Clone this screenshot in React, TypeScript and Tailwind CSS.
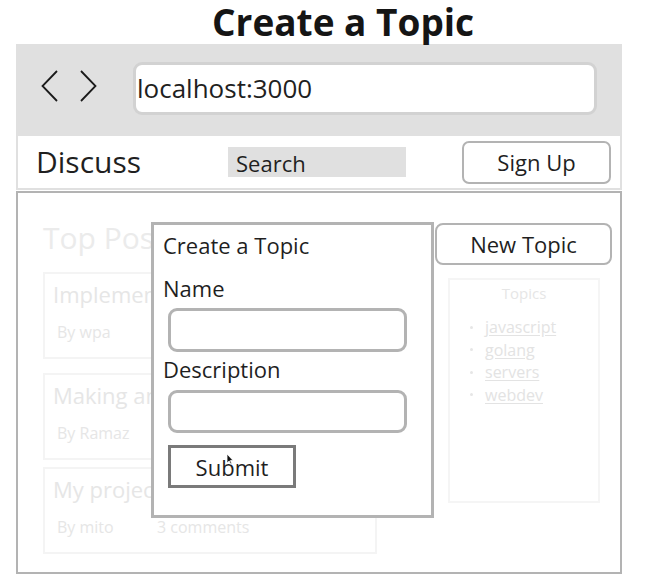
const posts = [
  { title: 'Implementing auth', author: 'By wpa', comments: '', top: 'mt-[16px]' },
  { title: 'Making an app', author: 'By Ramaz', comments: '', top: 'mt-[14px]' },
  { title: 'My project', author: 'By mito', comments: '3 comments', top: 'mt-[7px]' },
];

const topics = ['javascript', 'golang', 'servers', 'webdev'];

const Chevron = ({ dir }: { dir: 'left' | 'right' }) => (
  <svg width="17" height="32" viewBox="0 0 17 32" className="mb-[5px]">
    <polyline
      points={dir === 'left' ? '16,1 1.5,16 16,31' : '1,1 15.5,16 1,31'}
      fill="none"
      stroke="#1a1a1a"
      strokeWidth="1.8"
    />
  </svg>
);

const App = () => {
  return (
    <div className="w-[667px] h-[585px] bg-white text-[#1f1f1f] font-['Open_Sans',sans-serif] overflow-hidden">
      <h1 className="pl-[212px] text-[37px] leading-[44px] font-bold text-[#151515]">Create a Topic</h1>

      <div className="ml-[16px] w-[606px]">
        {/* browser chrome */}
        <div className="bg-[#e0e0e0] flex items-center h-[92px] pt-[18px] pb-[21px]">
          <div className="ml-[25px] flex items-center gap-[22px]">
            <Chevron dir="left" />
            <Chevron dir="right" />
          </div>
          <div className="ml-[36px] w-[464px] h-[53px] bg-white border-[3px] border-[#d2d2d2] rounded-[9px] flex items-center pl-[1px] text-[26px]">
            localhost:3000
          </div>
        </div>

        {/* app header */}
        <div className="bg-[#e0e0e0] px-[2px] pb-[2px]">
          <div className="bg-white h-[52px] flex items-center">
            <div className="ml-[18px] text-[30px] leading-[36px]">Discuss</div>
            <div className="ml-[87px] w-[178px] h-[30px] bg-[#e0e0e0] pl-[8px] text-[22px] leading-[33px]">Search</div>
            <button className="ml-[56px] w-[149px] h-[43px] border-2 border-[#b3b3b3] rounded-[7px] text-[22px] leading-[30px]">Sign Up</button>
          </div>
        </div>

        {/* page body */}
        <div className="relative mt-[1px] w-[606px] h-[383px] border-2 border-[#b3b3b3] flex">
          <div className="pl-[25px] pt-[27px] w-[361px]">
            <div className="whitespace-nowrap text-[30px] leading-[36px] text-[#ebebeb]">Top Posts</div>
            {posts.map((p) => (
              <div key={p.author} className={`${p.top} w-[334px] h-[87px] border-2 border-[#f4f4f4] pl-[8px] pt-[5px]`}>
                <div className="whitespace-nowrap text-[22px] leading-[30px] text-[#e6e6e6]">{p.title}</div>
                <div className="mt-[12px] pl-[4px] flex text-[16px] leading-[22px] text-[#e6e6e6]">
                  <span className="w-[100px]">{p.author}</span>
                  <span>{p.comments}</span>
                </div>
              </div>
            ))}
          </div>

          <div className="ml-[56px] pt-[30px] w-[177px]">
            <button className="w-[177px] h-[42px] border-2 border-[#b3b3b3] rounded-[8px] text-[22px] leading-[30px]">New Topic</button>
            <div className="mt-[13px] ml-[13px] w-[152px] h-[225px] border-2 border-[#f5f5f5] pt-[3px]">
              <div className="text-center text-[15px] leading-[20px] text-[#e6e6e6]">Topics</div>
              <ul className="mt-[13px] pl-[20px] text-[16px] leading-[22.5px]">
                {topics.map((t) => (
                  <li key={t} className="flex items-center">
                    <span className="w-[3px] h-[3px] rounded-full bg-[#e6e6e6]" />
                    <a className="ml-[12px] text-[#e3e3e3] underline underline-offset-2">{t}</a>
                  </li>
                ))}
              </ul>
            </div>
          </div>

          {/* modal */}
          <div className="absolute left-[133px] top-[29px] w-[283px] h-[296px] bg-white border-[3px] border-[#b3b3b3] pl-[9px] pt-[5px]">
            <div className="text-[22px] leading-[30px]">Create a Topic</div>
            <div className="mt-[13px] text-[22px] leading-[30px]">Name</div>
            <div className="mt-[5px] ml-[5px] w-[239px] h-[44px] border-[3px] border-[#b3b3b3] rounded-[9px]" />
            <div className="mt-[2px] text-[22px] leading-[30px]">Description</div>
            <div className="mt-[6px] ml-[5px] w-[239px] h-[43px] border-[3px] border-[#b3b3b3] rounded-[9px]" />
            <div className="relative mt-[12px] ml-[5px] w-[128px] h-[43px] border-[3px] border-[#7a7a7a] flex items-center justify-center text-[22px] leading-[30px]">
              Submit
              <svg className="absolute left-[55px] top-[5px]" width="8" height="12" viewBox="0 0 8 12">
                <path d="M1 1 L1 10 L3.2 8 L4.6 11 L5.8 10.4 L4.4 7.6 L7 7.4 Z" fill="#111" stroke="#fff" strokeWidth="0.8" />
              </svg>
            </div>
          </div>
        </div>
      </div>
    </div>
  );
};

export default App;
